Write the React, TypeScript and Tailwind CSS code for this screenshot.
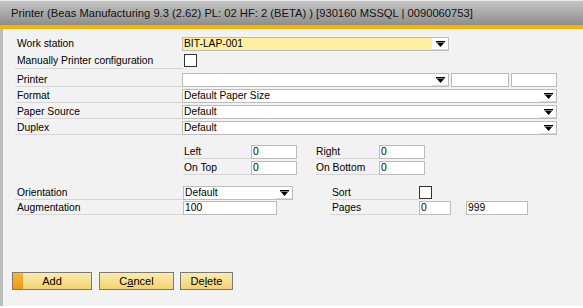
import React from "react";

const font = "font-['Liberation_Sans',Arial,sans-serif]";

const Arrow = () => (
    <svg width="9" height="6" viewBox="0 0 9 6" className="block">
        <rect x="0" y="0" width="9" height="1.5" fill="#000" />
        <polygon points="1,2 8,2 4.5,6" fill="#000" />
    </svg>
);

const Label = ({ text, w, className = "" }: { text: string; w: string; className?: string }) => (
    <div className={`${w} ${className} flex items-center border-b border-[#d6d6d6] text-[10.3px] text-black whitespace-nowrap`}>
        {text}
    </div>
);

const Input = ({ value = "", w, bg = "bg-white" }: { value?: string; w: string; bg?: string }) => (
    <div className={`${w} ${bg} h-[14px] border border-[#bcbcbc] flex items-center pl-[1px] text-[10.3px] text-black`}>
        {value}
    </div>
);

const Combo = ({ value = "", w, bg = "bg-white" }: { value?: string; w: string; bg?: string }) => (
    <div className={`${w} h-[14px] border border-[#bcbcbc] flex bg-white`}>
        <div className={`flex-1 ${bg} flex items-center pl-[1px] text-[10.3px] text-black`}>{value}</div>
        <div className="w-[16px] flex items-center justify-center border-b border-[#d9d9d9]">
            <Arrow />
        </div>
    </div>
);

const Check = () => <div className="w-[13px] h-[13px] border border-[#333] bg-white" />;

const Button = ({ w, children, primary = false }: { w: string; children: React.ReactNode; primary?: boolean }) => (
    <button
        className={`${w} h-[18px] relative border border-[#7a7a7a] bg-gradient-to-b from-[#fbeab0] to-[#f3d36e] text-[11px] text-black flex items-center justify-center`}
    >
        {primary && (
            <span className="absolute left-0 top-0 bottom-0 w-[10px] bg-gradient-to-b from-[#f6b53a] to-[#ee9a12]" />
        )}
        <span className="relative">{children}</span>
    </button>
);

export default function App() {
    return (
        <div className={`w-[583px] h-[308px] bg-white ${font}`}>
            {/* title bar */}
            <div className="h-[25px] border-t border-[#e8e8e8] bg-gradient-to-b from-[#c4c4c4] to-[#8e8e8e] flex items-center pl-[11px] text-[11.2px] text-[#111] whitespace-nowrap">
                Printer (Beas Manufacturing 9.3 (2.62) PL: 02 HF: 2 (BETA) ) [930160 MSSQL | 0090060753]
            </div>
            <div className="h-[4px] bg-[#f5b400]" />

            <div className="h-[277px] bg-[#f2f2f2] border-l-[3px] border-[#bdbdbd] pl-[12px] flex flex-col">
                <div className="mt-[8px] flex h-[14px]">
                    <Label text="Work station" w="w-[167px] pl-[2px]" className="border-b-0" />
                    <Combo value="BIT-LAP-001" w="w-[267px]" bg="bg-[#fff0a0]" />
                </div>
                <div className="mt-[2px] flex h-[16px]">
                    <Label text="Manually Printer configuration" w="w-[168px] pl-[2px]" />
                    <div className="pt-[1px] pl-[1px]">
                        <Check />
                    </div>
                </div>
                <div className="mt-[4px] flex h-[14px] gap-[2px]">
                    <Label text="Printer" w="w-[167px] pl-[2px]" className="mr-[-2px]" />
                    <Combo w="w-[267px]" />
                    <Input w="w-[58px]" />
                    <Input w="w-[46px]" />
                </div>
                {["Format", "Paper Source", "Duplex"].map((l, i) => (
                    <div key={l} className="mt-[2px] flex h-[14px]">
                        <Label text={l} w="w-[167px] pl-[2px]" />
                        <Combo value={i === 0 ? "Default Paper Size" : "Default"} w="w-[375px]" />
                    </div>
                ))}

                <div className="mt-[10px] flex h-[14px] pl-[168px]">
                    <Label text="Left" w="w-[68px] pl-[1px]" />
                    <Input value="0" w="w-[46px]" />
                    <Label text="Right" w="w-[63px]" className="ml-[19px]" />
                    <Input value="0" w="w-[46px]" />
                </div>
                <div className="mt-[2px] flex h-[14px] pl-[168px]">
                    <Label text="On Top" w="w-[68px] pl-[1px]" />
                    <Input value="0" w="w-[46px]" />
                    <Label text="On Bottom" w="w-[63px]" className="ml-[19px]" />
                    <Input value="0" w="w-[46px]" />
                </div>

                <div className="mt-[11px] flex h-[14px]">
                    <Label text="Orientation" w="w-[168px] pl-[2px]" />
                    <Combo value="Default" w="w-[110px]" />
                    <Label text="Sort" w="w-[89px] pl-[2px]" className="ml-[37px]" />
                    <Check />
                </div>
                <div className="mt-[1px] flex h-[14px]">
                    <Label text="Augmentation" w="w-[168px] pl-[2px]" />
                    <Input value="100" w="w-[94px]" />
                    <Label text="Pages" w="w-[89px] pl-[2px]" className="ml-[53px]" />
                    <Input value="0" w="w-[32px]" />
                    <Input value="999" w="w-[62px] ml-[15px]" />
                </div>

                <div className="mt-[57px] flex ml-[-3px]">
                    <Button w="w-[80px]" primary>
                        Add
                    </Button>
                    <div className="w-[7px]" />
                    <Button w="w-[75px]">
                        C<span className="underline">a</span>ncel
                    </Button>
                    <div className="w-[6px]" />
                    <Button w="w-[53px]">
                        De<span className="underline">l</span>ete
                    </Button>
                </div>
            </div>
        </div>
    );
}
